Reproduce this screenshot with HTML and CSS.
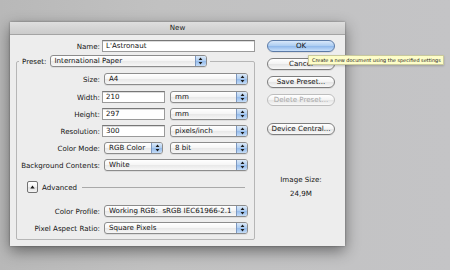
FILE: index.html
```html
<!DOCTYPE html>
<html>
<head>
<meta charset="utf-8">
<title>New</title>
<link rel="stylesheet" href="styles.css">
</head>
<body>
<div class="window">
  <div class="titlebar">New</div>
  <div class="content">
    <div class="main">
      <div class="row name-row">
        <span class="lbl">Name:</span>
        <div class="input name-input">L'Astronaut</div>
      </div>
      <fieldset class="preset">
        <legend class="legend">
          <span class="legend-lbl">Preset:</span>
          <div class="select preset-select"><span class="txt">International Paper</span><span class="arr"><svg width="5" height="8" viewBox="0 0 5 8"><path d="M2.5 0.6L4.4 3.1H0.6z M2.5 7.4L4.4 4.9H0.6z" fill="#1b1b1b"/></svg></span></div>
        </legend>
        <div class="row frow first">
          <span class="lbl">Size:</span>
          <div class="select w-full"><span class="txt">A4</span><span class="arr"><svg width="5" height="8" viewBox="0 0 5 8"><path d="M2.5 0.6L4.4 3.1H0.6z M2.5 7.4L4.4 4.9H0.6z" fill="#1b1b1b"/></svg></span></div>
        </div>
        <div class="row frow second">
          <span class="lbl">Width:</span>
          <div class="input w-num">210</div>
          <div class="select w-unit"><span class="txt">mm</span><span class="arr"><svg width="5" height="8" viewBox="0 0 5 8"><path d="M2.5 0.6L4.4 3.1H0.6z M2.5 7.4L4.4 4.9H0.6z" fill="#1b1b1b"/></svg></span></div>
        </div>
        <div class="row frow">
          <span class="lbl">Height:</span>
          <div class="input w-num">297</div>
          <div class="select w-unit"><span class="txt">mm</span><span class="arr"><svg width="5" height="8" viewBox="0 0 5 8"><path d="M2.5 0.6L4.4 3.1H0.6z M2.5 7.4L4.4 4.9H0.6z" fill="#1b1b1b"/></svg></span></div>
        </div>
        <div class="row frow">
          <span class="lbl">Resolution:</span>
          <div class="input w-num">300</div>
          <div class="select w-unit"><span class="txt">pixels/inch</span><span class="arr"><svg width="5" height="8" viewBox="0 0 5 8"><path d="M2.5 0.6L4.4 3.1H0.6z M2.5 7.4L4.4 4.9H0.6z" fill="#1b1b1b"/></svg></span></div>
        </div>
        <div class="row frow">
          <span class="lbl">Color Mode:</span>
          <div class="select w-mode"><span class="txt">RGB Color</span><span class="arr"><svg width="5" height="8" viewBox="0 0 5 8"><path d="M2.5 0.6L4.4 3.1H0.6z M2.5 7.4L4.4 4.9H0.6z" fill="#1b1b1b"/></svg></span></div>
          <div class="select w-unit bits"><span class="txt">8 bit</span><span class="arr"><svg width="5" height="8" viewBox="0 0 5 8"><path d="M2.5 0.6L4.4 3.1H0.6z M2.5 7.4L4.4 4.9H0.6z" fill="#1b1b1b"/></svg></span></div>
        </div>
        <div class="row frow">
          <span class="lbl">Background Contents:</span>
          <div class="select w-full"><span class="txt">White</span><span class="arr"><svg width="5" height="8" viewBox="0 0 5 8"><path d="M2.5 0.6L4.4 3.1H0.6z M2.5 7.4L4.4 4.9H0.6z" fill="#1b1b1b"/></svg></span></div>
        </div>
        <div class="adv-row">
          <div class="disc"><svg width="5" height="4" viewBox="0 0 5 4"><path d="M2.5 0.4L4.7 3.6H0.3z" fill="#1b1b1b"/></svg></div>
          <span class="adv-text">Advanced</span>
          <div class="sep"></div>
        </div>
        <div class="row frow profile">
          <span class="lbl">Color Profile:</span>
          <div class="select w-full"><span class="txt">Working RGB:&nbsp; sRGB IEC61966-2.1</span><span class="arr"><svg width="5" height="8" viewBox="0 0 5 8"><path d="M2.5 0.6L4.4 3.1H0.6z M2.5 7.4L4.4 4.9H0.6z" fill="#1b1b1b"/></svg></span></div>
        </div>
        <div class="row frow">
          <span class="lbl">Pixel Aspect Ratio:</span>
          <div class="select w-full"><span class="txt">Square Pixels</span><span class="arr"><svg width="5" height="8" viewBox="0 0 5 8"><path d="M2.5 0.6L4.4 3.1H0.6z M2.5 7.4L4.4 4.9H0.6z" fill="#1b1b1b"/></svg></span></div>
        </div>
      </fieldset>
    </div>
    <div class="side">
      <div class="btn ok">OK</div>
      <div class="btn">Cancel</div>
      <div class="btn">Save Preset...</div>
      <div class="btn disabled">Delete Preset...</div>
      <div class="btn device">Device Central...</div>
      <div class="imgsize">
        <div class="is-lbl">Image Size:</div>
        <div class="is-val">24,9M</div>
      </div>
    </div>
  </div>
</div>
<div class="tooltip">Create a new document using the specified settings</div>
</body>
</html>
```

FILE: styles.css
```css
* { box-sizing: border-box; }
html, body { margin: 0; padding: 0; }
body {
  width: 450px;
  height: 270px;
  overflow: hidden;
  padding: 22px 0 0 10px;
  background: linear-gradient(to right, #b8b8b8 0%, #c1c1c1 35%, #c4c4c6 100%);
  font-family: "DejaVu Sans", sans-serif;
  font-size: 7.1px;
  color: #141414;
}
.window {
  width: 335px;
  height: 224px;
  background: #ededed;
  box-shadow: 0 5px 14px rgba(0,0,0,0.45), 0 0 2px rgba(0,0,0,0.35);
}
.titlebar {
  height: 13px;
  line-height: 12px;
  text-align: center;
  background: linear-gradient(#dedede, #cbcbcb);
  border-bottom: 1px solid #a4a4a4;
  color: #222;
}
.content {
  display: flex;
  height: 211px;
}
.main {
  width: 246px;
  flex: none;
  padding-top: 5px;
}
.row {
  display: flex;
  align-items: center;
  height: 12px;
}
.lbl {
  width: 83px;
  flex: none;
  text-align: right;
  white-space: nowrap;
}
.name-row .lbl { width: 90px; }
.input {
  height: 12px;
  margin-left: 2px;
  padding-left: 3px;
  line-height: 10px;
  background: #fff;
  border: 1px solid #9a9a9a;
  border-top-color: #777;
  box-shadow: inset 0 1px 0 #dcdcdc;
  white-space: nowrap;
}
.name-input { width: 153px; }
.w-num { width: 63px; }
.select {
  display: flex;
  height: 12px;
  margin-left: 4px;
  line-height: 10px;
  border: 1px solid #8c8c8c;
  border-radius: 3px;
  background: linear-gradient(#ffffff, #f6f6f6 45%, #e9e9e9 55%, #f7f7f7);
  box-shadow: 0 1px 0 rgba(0,0,0,0.07);
  overflow: hidden;
}
.select .txt {
  flex: 1;
  padding-left: 4px;
  white-space: nowrap;
  overflow: hidden;
}
.select .arr {
  width: 11px;
  flex: none;
  display: flex;
  align-items: center;
  justify-content: center;
  border-left: 1px solid #7d98c0;
  background: linear-gradient(#dbe9f9, #b3d0f1 45%, #97bdec 55%, #c4dcf7);
}
.w-full { width: 144px; }
.w-unit { width: 78px; margin-left: 5px; }
.w-mode { width: 59px; }
.bits { margin-left: 7px; }
.preset-select { width: 157px; margin-left: 3px; }

fieldset.preset {
  margin: 3px 0 0 6px;
  width: 239px;
  min-width: 0;
  padding: 6px 0 5px 0;
  border: 1px solid #b6b6b6;
  border-radius: 2px;
}
.legend {
  display: flex;
  align-items: center;
  height: 12px;
  padding: 0 3px;
  margin-left: 2px;
}
.legend-lbl { white-space: nowrap; }
.frow { margin-top: 5px; }
.frow.first { margin-top: 0; }
.frow.second { margin-top: 6px; }
.adv-row {
  display: flex;
  align-items: center;
  height: 12px;
  margin-top: 10px;
  padding: 0 9px 0 10px;
}
.disc {
  width: 11px;
  height: 12px;
  flex: none;
  display: flex;
  align-items: center;
  justify-content: center;
  border: 1px solid #727272;
  border-radius: 2px;
  background: linear-gradient(#ffffff, #f2f2f2 50%, #e2e2e2 51%, #f4f4f4);
}
.adv-text { margin-left: 4px; white-space: nowrap; }
.sep {
  flex: 1;
  height: 1px;
  margin-left: 5px;
  background: #a9a9a9;
}
.frow.profile { margin-top: 12px; }

.side {
  flex: 1;
  display: flex;
  flex-direction: column;
  gap: 6px;
  padding: 5px 10px 0 11px;
}
.btn {
  height: 12px;
  line-height: 10px;
  text-align: center;
  white-space: nowrap;
  border: 1px solid #7e7e7e;
  border-radius: 6px;
  background: linear-gradient(#ffffff, #f4f4f4 45%, #e6e6e6 55%, #f8f8f8);
  box-shadow: 0 1px 0 rgba(0,0,0,0.08);
}
.btn.ok {
  border-color: #5b7aa6;
  background: linear-gradient(#d8e8fa, #b0cff2 45%, #93bbec 55%, #c9e0fa);
}
.btn.disabled {
  color: #a8a8a8;
  border-color: #bdbdbd;
  box-shadow: none;
}
.btn.device { margin-top: 11px; }
.imgsize {
  margin-top: 34px;
  text-align: center;
  line-height: 9px;
}
.is-val { margin-top: 5px; }

.tooltip {
  position: absolute;
  left: 308px;
  top: 55px;
  width: 136px;
  height: 10px;
  padding-left: 3px;
  line-height: 8px;
  font-size: 4.95px;
  white-space: nowrap;
  overflow: hidden;
  color: #1a1a1a;
  background: #fdfdc8;
  border: 1px solid #c9c99c;
  box-shadow: 0 1px 2px rgba(0,0,0,0.2);
}
```
